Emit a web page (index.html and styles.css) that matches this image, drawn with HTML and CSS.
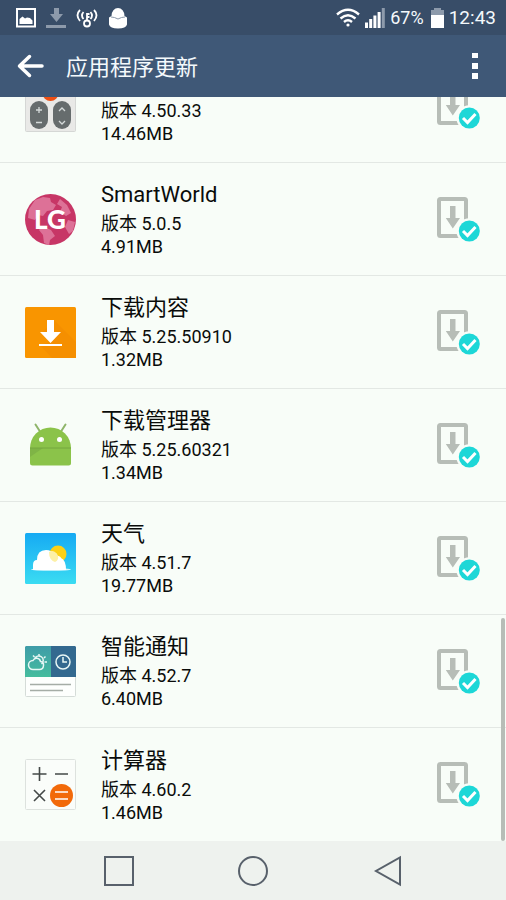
FILE: index.html
```html
<!DOCTYPE html>
<html lang="zh-CN">
<head>
    <meta charset="UTF-8">
    <meta name="viewport" content="width=device-width, initial-scale=1.0">
    <title>应用程序更新</title>
    <link rel="stylesheet" href="styles.css">
</head>
<body>
    <!-- Shared icon for every row -->
    <svg class="sprite" aria-hidden="true">
        <symbol id="installed" viewBox="0 0 43 45">
            <rect x="2" y="2" width="27" height="37" rx="1.5" fill="none" stroke="#b7bdb7" stroke-width="4"/>
            <path d="M13 9h5.500v12h4.500l-7.200 10.500L8.800 21H13z" fill="#b7bdb7"/>
            <circle cx="32.300" cy="34" r="12.800" fill="#f8fdf8"/>
            <circle cx="32.300" cy="34" r="10.500" fill="#1dd7d7"/>
            <path d="M26 34l4.500 4.500 8-8.500" fill="none" stroke="#fff" stroke-width="3"/>
        </symbol>
    </svg>

    <div class="screen">
        <div class="status-bar">
            <div class="status-icons">
                <svg width="20" height="20" viewBox="0 0 20 20">
                    <rect x="1" y="1" width="18" height="17.500" fill="none" stroke="#fff" stroke-width="2"/>
                    <path d="M3.500 16v-5l3-2.500 2.500 2 2-1 3 .5 2.500 2.500V16z" fill="#fff"/>
                </svg>
                <svg width="20" height="20" viewBox="0 0 20 20">
                    <path d="M8 0h5v6h4l-6.500 8L4 6h4zM0 17h20v3H0z" fill="#8d9aab"/>
                </svg>
                <svg width="22" height="20" viewBox="0 0 22 20">
                    <g fill="none" stroke="#fff" stroke-width="1.800">
                        <path d="M4 2q-5 5 0 11M7.500 4q-3 3.500 0 7M18 2q5 5 0 11M14.500 4q3 3.500 0 7"/>
                        <circle cx="11" cy="15.500" r="3"/>
                        <path d="M11 12.500V5M11 6h2.500M11 9h2.500"/>
                    </g>
                </svg>
                <svg width="20" height="22" viewBox="0 0 20 22">
                    <path d="M3.500 9a6.500 8 0 0 1 13 0L19 10.500v7Q18 21.500 10 21.500T1 17.500v-7z" fill="#fff"/>
                    <path d="M3 10q3.500 0 7 2 3.500-2 7-2" fill="none" stroke="#8d9aab" stroke-width="1"/>
                </svg>
            </div>
            <div class="status-info">
                <svg width="24" height="20" viewBox="0 0 24 20">
                    <g fill="none" stroke="#fff" stroke-width="2.400">
                        <path d="M1 6.500q11-9.500 22 0M4.500 10.500q7.500-6.500 15 0M8 14q4-3.500 8 0"/>
                    </g>
                    <circle cx="12" cy="17" r="1.600" fill="#fff"/>
                </svg>
                <svg width="20" height="20" viewBox="0 0 20 20">
                    <path d="M0 14.500h3V20H0zM4.200 11h3v9h-3zM8.400 7.500h3V20h-3zM12.600 4h3v16h-3z" fill="#fff"/>
                    <path d="M16.800 0h3v20h-3z" fill="#8d9aab"/>
                </svg>
                <span class="battery-text">67%</span>
                <svg width="13" height="20" viewBox="0 0 13 20">
                    <path d="M3 0h7v2h3v6H0V2h3z" fill="#8d9aab"/>
                    <path d="M0 7h13v13H0z" fill="#fff"/>
                </svg>
                <span class="clock">12:43</span>
            </div>
        </div>

        <header class="header">
            <button class="icon-button" aria-label="返回">
                <svg width="28" height="24" viewBox="0 0 28 24">
                    <path d="M25 12H3M12.500 2.500L2.500 12l10 9.500" fill="none" stroke="#fff" stroke-width="3.500" stroke-linecap="round" stroke-linejoin="round"/>
                </svg>
            </button>
            <h1 class="title">应用程序更新</h1>
            <button class="icon-button" aria-label="更多">
                <svg width="6" height="28" viewBox="0 0 6 28">
                    <path d="M0 1h6v5H0zM0 11h6v6H0zM0 21h6v6H0z" fill="#fff"/>
                </svg>
            </button>
        </header>

        <main class="content">
            <ul class="app-list">
                <li class="app">
                    <svg class="app-icon" viewBox="0 0 51 51">
                        <rect x=".5" y=".5" width="50" height="50" rx="1" fill="#e9e9e7" stroke="#d5d7d5"/>
                        <circle cx="25.500" cy="12" r="8" fill="#ee4f14"/>
                        <rect x="5" y="20" width="18" height="28" rx="9" fill="#666c6d"/>
                        <rect x="28" y="20" width="18" height="28" rx="9" fill="#666c6d"/>
                        <path d="M11 29h6M14 26v6M11 41.500h6M34 30l3-3 3 3M34 40l3 3 3-3" fill="none" stroke="#d5dada" stroke-width="1.300"/>
                    </svg>
                    <div class="app-info">
                        <p class="app-meta">版本 4.50.33</p>
                        <p class="app-meta">14.46MB</p>
                    </div>
                    <button class="icon-button" aria-label="已更新"><svg class="installed"><use href="#installed"/></svg></button>
                </li>
                <li class="app">
                    <svg class="app-icon" viewBox="0 0 51 51">
                        <circle cx="25.500" cy="25.500" r="25.500" fill="#c73666"/>
                        <path d="M10 6l8-3 7 1 1 4 5 3-3 5-6 1-4 5-5-1-3 5-7-2 1-9zM35 5l7 6 4 8-5 3-6-4 2-5-5-3zM17 32l9 4 4 6-5 4-1 5-5-2-1-8-4-5zM43 26l7 2-2 9-4 3-4-7z" fill="#dd7197"/>
                        <text class="lg-text" x="9" y="35">LG</text>
                    </svg>
                    <div class="app-info">
                        <h2 class="app-name">SmartWorld</h2>
                        <p class="app-meta">版本 5.0.5</p>
                        <p class="app-meta">4.91MB</p>
                    </div>
                    <button class="icon-button" aria-label="已更新"><svg class="installed"><use href="#installed"/></svg></button>
                </li>
                <li class="app">
                    <svg class="app-icon" viewBox="0 0 51 51">
                        <rect width="51" height="51" rx="1.500" fill="#f99500"/>
                        <path d="M29 13l22 22v16H27L15 38l10-3-8-9z" fill="#f58f00"/>
                        <path d="M22 13h7v12h7L25.500 36 15 25h7zM14 37h23v2H14z" fill="#fff"/>
                    </svg>
                    <div class="app-info">
                        <h2 class="app-name">下载内容</h2>
                        <p class="app-meta">版本 5.25.50910</p>
                        <p class="app-meta">1.32MB</p>
                    </div>
                    <button class="icon-button" aria-label="已更新"><svg class="installed"><use href="#installed"/></svg></button>
                </li>
                <li class="app">
                    <svg class="app-icon" viewBox="0 0 51 51">
                        <path d="M10.500 4.500l4.500 7M40.500 4.500l-4.500 7" stroke="#8fb56a" stroke-width="2" stroke-linecap="round"/>
                        <path d="M5 28a20.500 20.500 0 0 1 41 0z" fill="#8bc34a"/>
                        <path d="M5 28h41v15a2.500 2.500 0 0 1-2.500 2.500h-36A2.500 2.500 0 0 1 5 43z" fill="#8bc34a"/>
                        <path d="M5 28h13L5 37z" fill="#7fb446"/>
                        <path d="M5 28h41" stroke="#74a63e"/>
                        <circle cx="16.500" cy="19.500" r="2.500" fill="#fff"/>
                        <circle cx="34.500" cy="19.500" r="2.500" fill="#fff"/>
                    </svg>
                    <div class="app-info">
                        <h2 class="app-name">下载管理器</h2>
                        <p class="app-meta">版本 5.25.60321</p>
                        <p class="app-meta">1.34MB</p>
                    </div>
                    <button class="icon-button" aria-label="已更新"><svg class="installed"><use href="#installed"/></svg></button>
                </li>
                <li class="app">
                    <svg class="app-icon" viewBox="0 0 51 51">
                        <defs>
                            <linearGradient id="sky" x2="0" y2="1">
                                <stop offset="0" stop-color="#16aaf3"/>
                                <stop offset="1" stop-color="#3bdcf2"/>
                            </linearGradient>
                        </defs>
                        <rect width="51" height="51" rx="1.500" fill="url(#sky)"/>
                        <circle cx="33" cy="21" r="8.500" fill="#fcd116"/>
                        <ellipse cx="26" cy="36.500" rx="20" ry="1.300" fill="#d8f7fc"/>
                        <path d="M8 37v-5q0-5 4-5 0-10 9-10 6 0 8 5 7 1 7 3 5 2 5 12z" fill="#fff"/>
                        <path d="M24 19a6 6 0 0 1 9 4q1 4-3 6-6-2-6-10z" fill="#fdf0a6"/>
                    </svg>
                    <div class="app-info">
                        <h2 class="app-name">天气</h2>
                        <p class="app-meta">版本 4.51.7</p>
                        <p class="app-meta">19.77MB</p>
                    </div>
                    <button class="icon-button" aria-label="已更新"><svg class="installed"><use href="#installed"/></svg></button>
                </li>
                <li class="app">
                    <svg class="app-icon" viewBox="0 0 51 51">
                        <defs>
                            <linearGradient id="notice" x2="0" y2="1">
                                <stop offset="0" stop-color="#3f9ca8"/>
                                <stop offset="1" stop-color="#45bd9e"/>
                            </linearGradient>
                        </defs>
                        <rect x=".5" y=".5" width="50" height="50" rx="1" fill="#fdfffd" stroke="#d5dcd8"/>
                        <path d="M1 0h25v31H0V1z" fill="url(#notice)"/>
                        <path d="M26 0h24l1 1v30H26z" fill="#33698f"/>
                        <g fill="none" stroke="#e8f7f5" stroke-width="1.500">
                            <path d="M8 23.500a4.500 4.500 0 0 1 0-9 4 4 0 0 1 7.500 1q3.500.5 3 4-.3 4-4 4zM9.500 13a4.500 4.500 0 1 1 7 5M14 10V8M19 12l1.500-1.500M19.500 16H22M9.500 11L8 9.500"/>
                            <circle cx="38" cy="16" r="7"/>
                            <path d="M38 11v5h4"/>
                        </g>
                        <path d="M5 38.500h41M5 44.500h33" stroke="#a5ada6" stroke-width="1.500"/>
                    </svg>
                    <div class="app-info">
                        <h2 class="app-name">智能通知</h2>
                        <p class="app-meta">版本 4.52.7</p>
                        <p class="app-meta">6.40MB</p>
                    </div>
                    <button class="icon-button" aria-label="已更新"><svg class="installed"><use href="#installed"/></svg></button>
                </li>
                <li class="app">
                    <svg class="app-icon" viewBox="0 0 51 51">
                        <rect x=".5" y=".5" width="50" height="50" rx="1" fill="#fafdfa" stroke="#dde2de"/>
                        <path d="M7.500 15h14M14.500 8v14M30 15h13M9 31l11 11M20 31L9 42" stroke="#444948" stroke-width="1.600"/>
                        <circle cx="36.500" cy="36.500" r="11.500" fill="#f26a0a"/>
                        <path d="M30 33h13M30 40h13" stroke="#fff" stroke-width="1.300"/>
                    </svg>
                    <div class="app-info">
                        <h2 class="app-name">计算器</h2>
                        <p class="app-meta">版本 4.60.2</p>
                        <p class="app-meta">1.46MB</p>
                    </div>
                    <button class="icon-button" aria-label="已更新"><svg class="installed"><use href="#installed"/></svg></button>
                </li>
            </ul>
            <div class="scroll-thumb"></div>
        </main>

        <nav class="nav-bar">
            <button class="icon-button" aria-label="最近">
                <svg width="32" height="32" viewBox="0 0 32 32"><rect x="2" y="2" width="28" height="28" fill="none" stroke="#58616b" stroke-width="2"/></svg>
            </button>
            <button class="icon-button" aria-label="主页">
                <svg width="32" height="32" viewBox="0 0 32 32"><circle cx="16" cy="16" r="14" fill="none" stroke="#58616b" stroke-width="2"/></svg>
            </button>
            <button class="icon-button" aria-label="后退">
                <svg width="32" height="32" viewBox="0 0 32 32"><path d="M28 2.500v27L4 16z" fill="none" stroke="#58616b" stroke-width="2"/></svg>
            </button>
        </nav>
    </div>
</body>
</html>
```
FILE: styles.css
```css
* {
    box-sizing: border-box;
}

body {
    margin: 0;
    font-family: Roboto, "Noto Sans CJK SC", sans-serif;
    background-color: #f8fdf8;
    color: #0a0c0a;
}

svg {
    display: block;
    flex-shrink: 0;
}

.sprite {
    display: none;
}

.screen {
    display: flex;
    flex-direction: column;
    height: 100vh;
}

.status-bar {
    display: flex;
    justify-content: space-between;
    align-items: center;
    height: 35px;
    padding: 0 10px 0 16px;
    background-color: #384d68;
    color: #f4f9fc;
}

.status-icons {
    display: flex;
    align-items: center;
    gap: 10px;
}

.status-info {
    display: flex;
    align-items: center;
    gap: 5px;
}

.battery-text {
    margin-right: 2px;
    font-size: 18px;
}

.clock {
    font-size: 19px;
}

.header {
    display: flex;
    align-items: center;
    gap: 21px;
    height: 62px;
    padding: 0 28px 0 17px;
    background-color: #3f5877;
    color: #f4f9fc;
}

.title {
    flex: 1;
    margin: 0;
    padding-bottom: 3px;
    font-size: 22px;
    font-weight: 400;
}

.icon-button {
    padding: 0;
    border: none;
    background: none;
    cursor: pointer;
}

.content {
    position: relative;
    display: flex;
    flex: 1;
    flex-direction: column;
    justify-content: flex-end;
    min-height: 0;
    overflow: hidden;
}

.app-list {
    margin: 0;
    padding: 0;
    list-style: none;
}

.app {
    display: flex;
    align-items: center;
    gap: 25px;
    height: 113px;
    padding: 0 26px 0 25px;
    border-bottom: 1px solid #e3e8e4;
}

.app:last-child {
    border-bottom: none;
}

.app-icon {
    width: 51px;
    height: 51px;
}

.lg-text {
    font-family: Lato, sans-serif;
    font-size: 26px;
    font-weight: 900;
    fill: #fff;
}

.app-info {
    display: flex;
    flex: 1;
    flex-direction: column;
    align-self: flex-end;
    padding-bottom: 17px;
}

.app-name {
    margin: 0;
    font-size: 22px;
    font-weight: 400;
    line-height: 34px;
}

.app-meta {
    margin: 0;
    font-size: 18px;
    line-height: 23px;
}

.installed {
    width: 43px;
    height: 45px;
}

.scroll-thumb {
    position: absolute;
    right: 1px;
    bottom: 0;
    width: 4px;
    height: 30%;
    border-radius: 2px;
    background-color: #b7bdb7;
}

.nav-bar {
    display: flex;
    justify-content: space-evenly;
    align-items: center;
    height: 59px;
    background-color: #eef2ee;
}
```
